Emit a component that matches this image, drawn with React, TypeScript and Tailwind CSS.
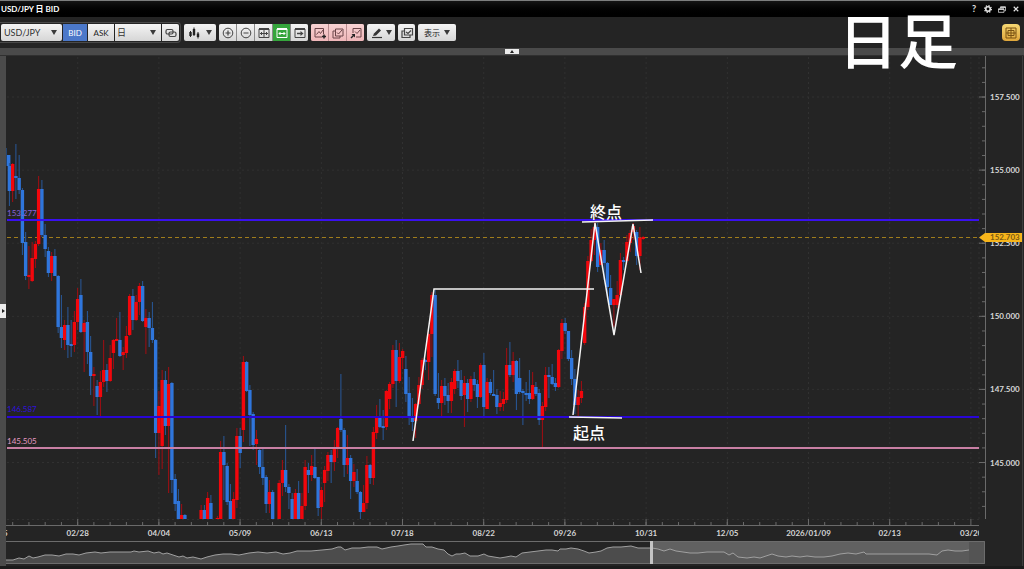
import { useState } from "react";
import type { ReactNode } from "react";

type Candle = [dir: "u" | "d", high: number, top: number, bottom: number, low: number];

const FLOOR = 519;
const FIRST_X = 6.15;
const STEP = 3.25;

// one entry per daily bar, null = bar is below the visible range
const candles: (Candle | null)[] = [
  ["d", 148, 155, 166, 166], ["d", 163, 166, 191, 206], ["u", 163, 164, 191, 202], ["d", 144, 176, 178, 199],
  ["d", 155, 178, 190, 194], ["d", 188, 190, 243, 255], ["d", 232, 242, 276, 280], ["u", 246, 275, 277, 289],
  ["u", 242, 258, 281, 282], ["u", 241, 244, 259, 268], ["u", 176, 189, 244, 246], ["d", 180, 189, 235, 237],
  ["d", 224, 235, 249, 257], ["d", 247, 251, 273, 277], ["u", 252, 256, 273, 281], ["d", 249, 256, 276, 276],
  ["d", 275, 276, 327, 333], ["d", 295, 327, 338, 348], ["u", 320, 325, 340, 350], ["d", 307, 325, 345, 358],
  ["d", 320, 344, 346, 357], ["u", 311, 322, 345, 352], ["u", 288, 299, 322, 330], ["d", 279, 295, 332, 333],
  ["u", 320, 323, 332, 372], ["d", 311, 322, 352, 364], ["d", 336, 352, 376, 395], ["u", 367, 374, 376, 406],
  ["d", 380, 386, 397, 415], ["u", 371, 382, 397, 417], ["u", 340, 370, 382, 387], ["d", 364, 370, 381, 392],
  ["u", 345, 358, 381, 382], ["u", 339, 340, 353, 369], ["u", 318, 339, 341, 341], ["d", 312, 340, 356, 357],
  ["u", 347, 352, 355, 370], ["u", 326, 336, 353, 358], ["u", 294, 296, 335, 336], ["d", 289, 296, 320, 330],
  ["u", 295, 302, 320, 321], ["u", 283, 286, 302, 315], ["d", 281, 286, 321, 322], ["u", 309, 318, 327, 354],
  ["d", 312, 318, 328, 347], ["d", 302, 328, 340, 343], ["d", 339, 340, 433, 458], ["u", 391, 406, 433, 475],
  ["u", 370, 380, 446, 469], ["d", 371, 380, 426, 435], ["u", 367, 384, 426, 493], ["d", 382, 383, 480, 493],
  ["d", 474, 479, 504, 511], ["d", 489, 501, 519, 519], ["u", 504, 515, 519, 519], ["d", 514, 515, 519, 519],
  null, null, null, null,
  ["u", 505, 510, 519, 519], ["d", 505, 510, 519, 519], ["u", 492, 498, 519, 519], ["d", 495, 503, 519, 519],
  null, ["u", 516, 518, 519, 519], ["u", 441, 452, 519, 519], ["d", 436, 452, 465, 500],
  ["d", 463, 466, 502, 505], ["d", 484, 501, 519, 519], ["u", 492, 499, 519, 519], ["u", 428, 436, 500, 508],
  ["d", 428, 436, 453, 468], ["u", 356, 362, 430, 442], ["d", 361, 362, 391, 392], ["d", 385, 390, 415, 446],
  ["d", 412, 414, 445, 450], ["u", 430, 439, 444, 465], ["d", 449, 450, 467, 474], ["d", 448, 467, 478, 485],
  ["d", 475, 477, 504, 513], ["u", 480, 492, 504, 513], ["d", 490, 492, 519, 519], null,
  ["u", 480, 483, 519, 519], ["u", 460, 470, 483, 496], ["d", 425, 470, 487, 492], ["d", 484, 487, 493, 509],
  ["d", 493, 499, 519, 519], ["u", 489, 493, 519, 519], ["d", 481, 493, 519, 519], ["u", 493, 506, 519, 519],
  ["u", 460, 467, 506, 510], ["d", 463, 470, 475, 493], ["u", 455, 466, 475, 481], ["d", 449, 467, 478, 479],
  ["d", 477, 477, 508, 516], ["u", 487, 490, 507, 519], ["u", 466, 470, 483, 502], ["u", 452, 455, 471, 481],
  ["d", 450, 455, 462, 483], ["u", 440, 449, 462, 471], ["u", 427, 428, 449, 458], ["d", 374, 419, 430, 432],
  ["d", 428, 430, 465, 477], ["u", 435, 458, 465, 474], ["d", 455, 458, 481, 499], ["u", 464, 472, 481, 487],
  ["d", 469, 481, 492, 494], ["d", 491, 492, 512, 519], ["u", 485, 503, 512, 512], ["u", 456, 465, 503, 509],
  ["d", 464, 465, 478, 484], ["u", 427, 432, 478, 485], ["u", 405, 417, 433, 439], ["d", 399, 417, 427, 428],
  ["d", 410, 426, 428, 440], ["u", 390, 391, 427, 430], ["u", 382, 384, 399, 409], ["u", 345, 350, 384, 388],
  ["d", 340, 350, 381, 407], ["u", 343, 357, 381, 383], ["u", 349, 351, 358, 369], ["d", 356, 369, 394, 402],
  ["d", 377, 393, 416, 425], ["d", 398, 416, 422, 431], ["u", 403, 404, 421, 438], ["u", 377, 385, 404, 405],
  ["u", 358, 360, 385, 389], ["d", 359, 360, 362, 370], ["u", 330, 334, 362, 380], ["u", 292, 295, 334, 357],
  ["d", 290, 295, 394, 396], ["d", 373, 398, 403, 409], ["u", 380, 386, 403, 416], ["d", 378, 386, 396, 405],
  ["d", 383, 395, 401, 413], ["u", 378, 382, 401, 413], ["u", 369, 371, 389, 394], ["d", 360, 371, 381, 388],
  ["d", 370, 380, 396, 400], ["u", 376, 383, 395, 427], ["d", 379, 383, 399, 412], ["u", 376, 379, 399, 402],
  ["d", 372, 379, 385, 391], ["d", 380, 384, 397, 408], ["u", 363, 365, 397, 398], ["d", 353, 365, 407, 416],
  ["u", 378, 382, 409, 409], ["d", 379, 382, 393, 395], ["d", 370, 394, 396, 396], ["d", 389, 395, 407, 414],
  ["u", 391, 403, 407, 411], ["u", 392, 399, 404, 411], ["u", 348, 365, 400, 403], ["d", 342, 365, 375, 377],
  ["u", 352, 361, 375, 382], ["d", 360, 361, 394, 410], ["d", 358, 378, 392, 394], ["d", 389, 391, 393, 425],
  ["d", 382, 393, 395, 401], ["d", 370, 393, 399, 404], ["u", 372, 385, 399, 400], ["d", 382, 387, 394, 396],
  ["d", 389, 393, 420, 425], ["u", 402, 406, 420, 448], ["u", 367, 375, 407, 411], ["d", 367, 375, 377, 398],
  ["d", 364, 377, 384, 385], ["d", 378, 383, 387, 391], ["u", 349, 350, 387, 388], ["u", 319, 323, 351, 359],
  ["d", 318, 323, 331, 334], ["d", 331, 331, 359, 361], ["d", 350, 358, 379, 385], ["d", 369, 379, 405, 414],
  ["u", 390, 397, 405, 416], ["u", 381, 391, 398, 403], ["u", 303, 307, 343, 345], ["u", 256, 261, 307, 310],
  ["u", 229, 240, 261, 262], ["u", 222, 227, 240, 255], ["d", 223, 227, 267, 272], ["u", 243, 250, 265, 265],
  ["d", 240, 250, 263, 280], ["d", 262, 263, 287, 298], ["d", 275, 288, 305, 305], ["u", 299, 299, 305, 327],
  ["u", 281, 295, 305, 308], ["u", 253, 260, 295, 300], ["d", 257, 260, 262, 270], ["u", 235, 242, 261, 265],
  ["u", 230, 233, 243, 252], ["u", 223, 226, 232, 240], ["d", 230, 232, 256, 265], ["u", 227, 238, 256, 270],
  ["u", 236, 237, 239, 240],
];

const prices = ["157.500", "155.000", "152.500", "150.000", "147.500", "145.000"];
const dates = ["02/28", "04/04", "05/09", "06/13", "07/18", "08/22", "09/26", "10/31", "12/05", "2026/01/09", "02/13"];

const priceY = (i: number) => 97 + i * 73.1;
const dateX = (i: number) => 77.7 + i * 81.2;

const overview: [number, number][] = [
  [6, 560], [13, 560], [19, 558], [24, 559], [29, 556], [33, 558], [38, 557], [45, 555], [52, 555], [59, 556], [66, 554],
  [73, 554], [79, 555], [86, 553], [95, 552], [101, 553], [110, 552], [119, 552], [131, 552], [134, 551], [139, 552],
  [148, 551], [154, 553], [159, 552], [163, 554], [167, 553], [173, 555], [179, 557], [183, 556], [187, 558], [193, 557],
  [201, 559], [207, 557], [215, 555], [223, 554], [231, 554], [239, 555], [249, 553], [258, 552], [267, 553], [276, 552],
  [283, 554], [290, 553], [297, 551], [311, 551], [322, 550], [332, 549], [338, 547], [341, 547], [345, 550], [352, 548],
  [360, 548], [368, 547], [377, 547], [382, 549], [391, 547], [398, 546], [404, 545], [411, 544], [418, 544], [423, 544],
  [426, 547], [432, 547], [438, 549], [444, 550], [448, 554], [452, 556], [456, 554], [460, 554], [465, 553], [470, 556],
  [478, 556], [484, 554], [488, 556], [494, 557], [500, 558], [506, 557], [511, 556], [516, 557], [522, 553], [530, 552],
  [538, 551], [546, 550], [552, 550], [558, 551], [560, 549], [566, 549], [571, 548], [578, 549], [584, 551], [589, 553],
  [596, 552], [601, 551], [607, 548], [613, 547], [621, 547], [631, 546], [638, 548], [646, 548], [652, 548], [658, 549],
  [664, 551], [670, 549], [676, 551], [683, 552], [690, 553], [698, 553], [707, 552], [714, 552], [724, 552], [729, 555],
  [733, 553], [738, 557], [747, 558], [754, 557], [760, 558], [766, 556], [772, 554], [778, 556], [786, 557], [792, 556],
  [800, 557], [807, 556], [815, 557], [824, 557], [832, 556], [840, 554], [848, 553], [856, 554], [864, 552], [866, 554],
  [876, 554], [888, 554], [900, 554], [912, 554], [921, 554], [929, 554], [937, 555], [942, 551], [948, 550], [955, 551],
  [962, 551], [969, 550],
];

const overviewLine = overview.map((p) => p.join(",")).join(" ");

function PriceChart() {
  return (
    <svg viewBox="6 56 1018 485" className="block h-auto w-full font-['Lato',sans-serif]">
      <rect x={6} y={56} width={1018} height={485} fill="#242424" />

      {/* grid */}
      <g stroke="#313131" strokeWidth={1} strokeDasharray="2 3">
        {prices.map((p, i) => (
          <line key={p} x1={7} x2={979} y1={priceY(i)} y2={priceY(i)} />
        ))}
        {[...dates, "03/20"].map((d, i) => (
          <line key={i} x1={dateX(i)} x2={dateX(i)} y1={57} y2={FLOOR} />
        ))}
        <line x1={979} x2={979} y1={57} y2={FLOOR} />
        <line x1={7} x2={979} y1={519.5} y2={519.5} />
      </g>

      {/* axes */}
      <g stroke="#6a6a6a" strokeWidth={1}>
        <line x1={985.5} x2={985.5} y1={56} y2={519} />
        {prices.map((p, i) => (
          <line key={p} x1={979} x2={985} y1={priceY(i)} y2={priceY(i)} />
        ))}
        {Array.from({ length: 31 }, (_, i) => 67.8 + i * 14.62).map((y) => (
          <line key={y} x1={982} x2={985} y1={y} y2={y} />
        ))}
        <line x1={6} x2={979} y1={525.5} y2={525.5} />
        {[...dates, "03/20"].map((d, i) => (
          <line key={i} x1={dateX(i)} x2={dateX(i)} y1={519} y2={525} />
        ))}
        {Array.from({ length: 59 }, (_, i) => 12.7 + i * 16.24).map((x) => (
          <line key={x} x1={x} x2={x} y1={522} y2={525} />
        ))}
      </g>
      <line x1={1022.5} x2={1022.5} y1={56} y2={541} stroke="#3d3d3d" />

      <line x1={7} x2={979} y1={237.5} y2={237.5} stroke="#a07d1c" strokeDasharray="4 3" />

      {candles.map((c, i) => {
        if (!c) return null;
        const [dir, high, top, bottom, low] = c;
        const x = FIRST_X + i * STEP;
        return (
          <g key={i}>
            <rect x={x - 0.5} y={high} width={1} height={low - high} fill={dir === "u" ? "#a30d12" : "#28599b"} />
            <rect x={Math.max(x - 1.7, 7)} y={top} width={3.4} height={bottom - top} fill={dir === "u" ? "#f2060c" : "#2f76dc"} />
          </g>
        );
      })}

      {/* horizontal levels */}
      <g fontSize={8}>
        <line x1={7} x2={979} y1={220} y2={220} stroke="#3a10f0" strokeWidth={2} />
        <text x={7} y={216} fill="#8a62dd">153.277</text>
        <line x1={7} x2={979} y1={417} y2={417} stroke="#2a06d6" strokeWidth={2} />
        <text x={7} y={412} fill="#3010dc">146.587</text>
        <line x1={7} x2={979} y1={448} y2={448} stroke="#c87fa4" strokeWidth={2} />
        <text x={7} y={444} fill="#e79cc3">145.505</text>
      </g>

      {/* drawn annotations */}
      <g stroke="#f4f4f4" strokeWidth={1.5} fill="none">
        <polyline points="413,441 434,289 594,289" />
        <polyline points="573,415 595,223 614,335 633,224 641,273" />
        <line x1={582} x2={653} y1={222} y2={220} />
        <line x1={569} x2={622} y1={417} y2={418} />
      </g>
      <g fill="#fff" fontSize={16} fontWeight={500} fontFamily="'Noto Sans CJK JP', sans-serif">
        <text x={590} y={218}>終点</text>
        <text x={573} y={439}>起点</text>
      </g>

      <g fill="#d6d6d6" fontSize={8} fontWeight={700}>
        {prices.map((p, i) => (
          <text key={p} x={990} y={priceY(i) + 3}>{p}</text>
        ))}
        {dates.map((d, i) => (
          <text key={d} x={dateX(i)} y={536} textAnchor="middle">{d}</text>
        ))}
        <svg x={958} y={526} width={21} height={14} viewBox="958 526 21 14">
          <text x={960} y={536}>03/20</text>
        </svg>
        <svg x={6} y={526} width={4} height={14} viewBox="6 526 4 14">
          <text x={3} y={536}>5</text>
        </svg>
      </g>

      <path d="M979 237.500L985 233H1022V242H985Z" fill="#f7b51b" />
      <text x={990} y={240} fontSize={8} fontWeight={700} fill="#7c5a14">152.703</text>
    </svg>
  );
}

function Overview() {
  return (
    <svg viewBox="6 541 1018 25" className="block h-auto w-full">
      <rect x={6} y={541} width={1018} height={25} fill="#242424" />
      <rect x={652} y={541} width={333} height={23} fill="#545454" />
      <polygon points={`6,564 ${overviewLine} 969,564`} fill="#4c4c4c" />
      <rect x={652} y={542} width={317} height={22} fill="#fff" fillOpacity={0.08} />
      <polyline points={overviewLine} fill="none" stroke="#a0a0a0" strokeWidth={1} />
      <path d="M6 541.500H984.500V563.500H6" fill="none" stroke="#6c6c6c" />
      <rect x={650} y={541} width={3} height={23} fill="#c4c4c4" />
      <line x1={1022.5} x2={1022.5} y1={541} y2={566} stroke="#3d3d3d" />
    </svg>
  );
}

function Icon({ children }: { children: ReactNode }) {
  return (
    <svg viewBox="0 0 14 14" className="h-3.5 w-3.5 shrink-0" fill="none" stroke="currentColor" strokeWidth={1.2} aria-hidden="true">
      {children}
    </svg>
  );
}

function Caret() {
  return (
    <svg viewBox="0 0 6 5" className="h-[5px] w-1.5 shrink-0" fill="#3a3a3a" aria-hidden="true">
      <path d="M0 0H6L3 5Z" />
    </svg>
  );
}

const face = "flex h-[17px] items-center justify-center bg-linear-to-b from-[#f4f4f4] to-[#d6d6d6] text-[#333]";

type ToolProps = { label: string; className: string; children: ReactNode };

function Tool({ label, className, children }: ToolProps) {
  return (
    <button type="button" aria-label={label} className={`flex h-[17px] items-center justify-center ${className}`}>
      {children}
    </button>
  );
}

function Toolbar() {
  const [side, setSide] = useState("BID");
  const plain = "w-[17px] bg-linear-to-b from-[#f4f4f4] to-[#d6d6d6] text-[#444]";
  const pink = "w-[17px] bg-linear-to-b from-[#f8d3d3] to-[#efb6b9] text-[#6b4448]";

  return (
    <div className="flex h-[31px] items-center bg-[#242424] pr-1">
      <div className="flex items-center gap-px rounded-r-sm border border-l-0 border-[#4a4a4a] py-px pr-px pl-px">
        <label className="relative flex items-center">
          <select aria-label="通貨ペア" className={`${face} w-[61px] appearance-none rounded-xs pl-[3px] text-[9px] leading-4`}>
            <option>USD/JPY</option>
          </select>
          <span className="pointer-events-none absolute right-[5px]"><Caret /></span>
        </label>
        {["BID", "ASK"].map((s) => (
          <button
            key={s}
            type="button"
            onClick={() => setSide(s)}
            className={
              side === s
                ? "h-[17px] w-6 bg-[#4b78c9] text-[8px] text-white"
                : "h-[17px] w-[26px] bg-linear-to-b from-[#f4f4f4] to-[#d6d6d6] text-[8px] text-[#222]"
            }
          >
            {s}
          </button>
        ))}
        <label className="relative flex items-center">
          <select aria-label="足種" className={`${face} w-[46px] appearance-none pl-[2px] text-[9px] leading-4`}>
            <option>日</option>
          </select>
          <span className="pointer-events-none absolute right-[5px]"><Caret /></span>
        </label>
        <Tool label="連動" className={`${plain} rounded-r-xs`}>
          <Icon>
            <rect x={2} y={3.500} width={7} height={4.500} rx={1.500} />
            <rect x={5} y={6} width={7} height={4.500} rx={1.500} />
          </Icon>
        </Tool>
      </div>

      <div className="ml-[3px] flex items-center gap-[3px]">
        <Tool label="チャート種類" className="w-8 gap-1 rounded-xs bg-linear-to-b from-[#f4f4f4] to-[#d6d6d6] text-[#222]">
          <Icon>
            <path d="M2.500 5V11M6 1.500V10M10 6V12.500" strokeWidth={1} />
            <path d="M2.500 6V10M6 3V9M10 7.500V11" strokeWidth={2.400} />
          </Icon>
          <Caret />
        </Tool>

        <div className="flex gap-px overflow-hidden rounded-xs bg-[#8a8a8a]">
          <Tool label="拡大" className={plain}>
            <Icon><circle cx={7} cy={7} r={4.800} strokeWidth={1} /><path d="M4.500 7H9.500M7 4.500V9.500" /></Icon>
          </Tool>
          <Tool label="縮小" className={plain}>
            <Icon><circle cx={7} cy={7} r={4.800} strokeWidth={1} /><path d="M4.500 7H9.500" /></Icon>
          </Tool>
          <Tool label="縦幅調整" className={plain}>
            <Icon>
              <path d="M2 3H12" strokeWidth={2} />
              <path d="M2 3V11.500H12V3M7 4V11M3 7.500H11M4.500 6V9M9.500 6V9" strokeWidth={1} />
            </Icon>
          </Tool>
          <Tool label="横幅調整" className="w-[17px] bg-[#35a53c] text-white">
            <Icon>
              <path d="M2 3H12" strokeWidth={2} />
              <path d="M2 3V11.500H12V3M4 7.500H10M5.500 6L4 7.500L5.500 9M8.500 6L10 7.500L8.500 9" strokeWidth={1} />
            </Icon>
          </Tool>
          <Tool label="最新へ移動" className={plain}>
            <Icon>
              <path d="M2 3H12" strokeWidth={2} />
              <path d="M2 3V11.500H12V3" strokeWidth={1} />
              <path d="M4 7.500H8" strokeWidth={1.600} />
              <path d="M7.500 5L10.500 7.500L7.500 10Z" fill="currentColor" stroke="none" />
            </Icon>
          </Tool>
        </div>

        <div className="flex gap-px overflow-hidden rounded-xs bg-[#b98c8f]">
          <Tool label="描画追加" className={pink}>
            <Icon>
              <path d="M9 11H2V2.500H10.500V8M3.500 8.500L6 5.500L7.500 7.500L10 4" strokeWidth={1} />
              <path d="M9 10.500H13M11 8.500V12.500" stroke="#222" strokeWidth={1.500} />
            </Icon>
          </Tool>
          <Tool label="描画複製" className={pink}>
            <Icon><path d="M4.500 3H12V10H4.500ZM4.500 5H2V12H9V10M6 6.500L7.500 8L11 4" strokeWidth={1} /></Icon>
          </Tool>
          <Tool label="描画削除" className={pink}>
            <Icon>
              <path d="M4 7V2.500H12V11H7M6 5.500L8 7.500L11 4" strokeWidth={1} />
              <path d="M2 12L5.500 8.500" stroke="#222" strokeWidth={1.500} />
              <path d="M2.500 8H6V11.500Z" fill="#222" stroke="none" />
            </Icon>
          </Tool>
        </div>

        <Tool label="ペン" className="w-7 gap-0.5 rounded-xs bg-linear-to-b from-[#f4f4f4] to-[#d6d6d6] text-[#333]">
          <Icon>
            <path d="M3 10L4 7.500L9 2.500L11 4.500L6 9.500Z" fill="currentColor" stroke="none" />
            <path d="M2 11.500H12" />
          </Icon>
          <Caret />
        </Tool>
        <Tool label="一覧" className={`${plain} rounded-xs`}>
          <Icon><path d="M4.500 2.500H12.500V9H4.500ZM4.500 5H2V11.500H10V9M6 6L8 7.500L11 4.500" strokeWidth={1.200} /></Icon>
        </Tool>
        <Tool label="表示" className="w-[38px] gap-1 rounded-xs bg-linear-to-b from-[#f4f4f4] to-[#d6d6d6] text-[8px] text-[#222]">
          <span>表示</span>
          <Caret />
        </Tool>
      </div>

      <button type="button" aria-label="レイアウト" className="ml-auto flex h-[17px] w-[18px] items-center justify-center rounded-sm bg-linear-to-b from-[#f6d873] to-[#dfa63a] text-[#7a5212]">
        <Icon>
          <path d="M2 2H12V12H2ZM7 2V12M2 7H12M4 4.500H10V9.500H4Z" strokeWidth={1} />
        </Icon>
      </button>
    </div>
  );
}

function TitleBar() {
  return (
    <header className="flex h-[17px] items-center justify-between border-t border-[#7d7f7f] bg-linear-to-b from-[#151515] to-black pr-0.5 pl-px text-white">
      <h1 className="text-[8px] font-bold">USD/JPY 日 BID</h1>
      <div className="flex items-center gap-0.5 text-[#e4e4e4]">
        <button type="button" aria-label="ヘルプ" className="w-3 text-[9px] font-bold">?</button>
        <button type="button" aria-label="設定" className="flex w-3 justify-center">
          <svg viewBox="0 0 10 10" className="h-2 w-2" fill="none" stroke="currentColor" aria-hidden="true">
            <circle cx={5} cy={5} r={2.800} strokeWidth={2} />
            <circle cx={5} cy={5} r={4.200} strokeWidth={1.600} strokeDasharray="1.65 1.65" />
          </svg>
        </button>
        <button type="button" aria-label="元に戻す" className="flex w-3 justify-center">
          <svg viewBox="0 0 10 8" className="h-[7px] w-2" fill="none" stroke="currentColor" aria-hidden="true">
            <path d="M3 2.500V1H9.500V5.500H8M0.500 3.500H7.500V7.500H0.500Z" />
            <path d="M0.500 3.500H7.500M3 1H9.500" strokeWidth={1.800} />
          </svg>
        </button>
        <button type="button" aria-label="閉じる" className="flex w-3 justify-center">
          <svg viewBox="0 0 8 8" className="h-1.5 w-1.5" stroke="currentColor" strokeWidth={1.600} aria-hidden="true">
            <path d="M1 1L7 7M7 1L1 7" />
          </svg>
        </button>
      </div>
    </header>
  );
}

export default function App() {
  return (
    <div className="relative min-h-screen bg-[#1b1b1b] font-['Lato','Noto_Sans_CJK_JP',sans-serif]">
      <TitleBar />
      <Toolbar />

      <div className="flex h-2 items-center justify-center border-b border-[#303030] bg-[#4a4a4a]">
        <button type="button" aria-label="ツールバーを隠す" className="flex h-[5px] w-3.5 items-center justify-center bg-[#ececec]">
          <svg viewBox="0 0 4 3" className="h-[3px] w-1" fill="#222" aria-hidden="true"><path d="M2 0L4 3H0Z" /></svg>
        </button>
      </div>

      <main className="flex">
        <div className="flex w-1.5 shrink-0 items-center bg-[#4b4b4b]">
          <button type="button" aria-label="パネルを開く" className="flex h-3.5 w-1.5 items-center justify-center bg-[#ececec]">
            <svg viewBox="0 0 3 4" className="h-1 w-[3px]" fill="#222" aria-hidden="true"><path d="M0 0L3 2L0 4Z" /></svg>
          </button>
        </div>
        <div className="min-w-0 flex-1">
          <PriceChart />
          <Overview />
        </div>
      </main>

      <p className="pointer-events-none absolute top-2 right-[66px] font-['Noto_Sans_CJK_JP',sans-serif] text-[60px] leading-[60px] font-medium text-white">
        日足
      </p>
    </div>
  );
}
